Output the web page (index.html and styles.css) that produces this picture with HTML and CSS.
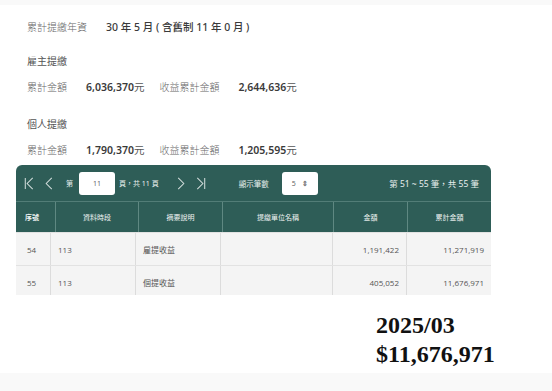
FILE: index.html
```html
<!DOCTYPE html>
<html lang="zh-Hant">
<head>
    <meta charset="UTF-8">
    <meta name="viewport" content="width=device-width, initial-scale=1.0">
    <title>累計提繳</title>
    <link rel="stylesheet" href="styles.css">
</head>
<body>
    <div class="page">
        <div class="summary">
            <div class="line">
                <span class="label">累計提繳年資</span>
                <span class="value">30 年 5 月 ( 含舊制 11 年 0 月 )</span>
            </div>

            <div class="section-title">雇主提繳</div>
            <div class="line amounts">
                <span class="label">累計金額</span>
                <span class="value">6,036,370<small>元</small></span>
                <span class="label">收益累計金額</span>
                <span class="value">2,644,636<small>元</small></span>
            </div>

            <div class="section-title">個人提繳</div>
            <div class="line amounts">
                <span class="label">累計金額</span>
                <span class="value">1,790,370<small>元</small></span>
                <span class="label">收益累計金額</span>
                <span class="value">1,205,595<small>元</small></span>
            </div>
        </div>

        <div class="grid-table">
            <div class="toolbar">
                <svg class="nav first" viewBox="0 0 10 14"><path d="M1 1v12M9 1L3 7l6 6"/></svg>
                <svg class="nav prev" viewBox="0 0 8 14"><path d="M7 1L1 7l6 6"/></svg>
                <span class="tb-text page-pre">第</span>
                <span class="page-input">11</span>
                <span class="tb-text page-post">頁，共 11 頁</span>
                <svg class="nav next" viewBox="0 0 8 14"><path d="M1 1l6 6-6 6"/></svg>
                <svg class="nav last" viewBox="0 0 10 14"><path d="M1 1l6 6-6 6M9 1v12"/></svg>
                <span class="tb-text size-label">顯示筆數</span>
                <span class="size-select">5 <b>&#8661;</b></span>
                <span class="range">第 51 ~ 55 筆，共 55 筆</span>
            </div>

            <div class="thead">
                <div class="th first-col">序號</div>
                <div class="th">資料時段</div>
                <div class="th">摘要說明</div>
                <div class="th">提繳單位名稱</div>
                <div class="th">金額</div>
                <div class="th">累計金額</div>
            </div>

            <div class="tbody">
                <div class="tr">
                    <div class="td">54</div>
                    <div class="td">113</div>
                    <div class="td">雇提收益</div>
                    <div class="td"></div>
                    <div class="td num">1,191,422</div>
                    <div class="td num">11,271,919</div>
                </div>
                <div class="tr">
                    <div class="td">55</div>
                    <div class="td">113</div>
                    <div class="td">個提收益</div>
                    <div class="td"></div>
                    <div class="td num">405,052</div>
                    <div class="td num">11,676,971</div>
                </div>
            </div>
        </div>

        <div class="total">
            <div>2025/03</div>
            <div>$11,676,971</div>
        </div>
    </div>
</body>
</html>
```

FILE: styles.css
```css
* {
    margin: 0;
    padding: 0;
    box-sizing: border-box;
}

body {
    font-family: 'Noto Sans', 'Noto Sans CJK TC', sans-serif;
    background: #f9f9f9;
    color: #333;
}

.page {
    margin-top: 5px;
    height: 368px;
    background: #fff;
    overflow: hidden;
}

/* summary block */
.summary {
    padding: 14px 0 0 27px;
}

.line {
    display: flex;
    align-items: center;
    height: 14px;
    font-size: 10px;
}

.label {
    color: #666;
    font-weight: 300;
}

.value {
    margin-left: 19px;
    font-size: 10.5px;
    font-weight: 600;
    color: #3a3a3a;
}

.line:first-child .value {
    font-weight: 500;
}

.value small {
    font-size: 10.5px;
    font-weight: 400;
    color: #555;
}

.amounts .value + .label {
    margin-left: 15px;
}

.section-title {
    font-size: 10px;
    line-height: 14px;
    color: #555;
    margin: 21px 0 11px;
}

.section-title + .line + .section-title {
    margin-top: 24px;
}

/* table */
.grid-table {
    margin: 9px 0 0 16px;
    width: 475px;
}

.toolbar {
    display: flex;
    align-items: center;
    height: 37px;
    padding: 0 12px 0 8px;
    background: #2e5d57;
    border-radius: 6px 6px 0 0;
    border-bottom: 1px solid #527d77;
    color: #e8efee;
}

.nav {
    height: 13px;
    fill: none;
    stroke: #d3dedc;
    stroke-width: 1.1;
}

.first { width: 10px; }
.prev { width: 8px; margin-left: 11px; }
.next { width: 8px; margin-left: 18px; }
.last { width: 10px; margin-left: 11px; }

.tb-text {
    font-size: 7px;
}

.page-pre { margin-left: 13px; }
.page-post { margin-left: 4px; }
.size-label { margin-left: 33px; font-size: 7.5px; }

.page-input,
.size-select {
    display: flex;
    align-items: center;
    height: 23px;
    width: 36px;
    background: #fff;
    border-radius: 3px;
    color: #666;
    font-size: 7px;
}

.page-input {
    justify-content: center;
    margin-left: 6px;
}

.size-select {
    margin-left: 13px;
    padding-left: 10px;
    gap: 6px;
}

.size-select b {
    font-size: 7px;
    color: #777;
}

.range {
    margin-left: auto;
    font-size: 8.5px;
}

.thead {
    display: grid;
    grid-template-columns: 39px 83px 84px 111px 74px 84px;
    height: 30px;
    background: #2e5d57;
    color: #eef3f2;
    font-size: 7px;
}

.th {
    display: flex;
    align-items: center;
    justify-content: center;
    border-left: 1px solid #5f8882;
}

.th:first-child {
    border-left: none;
}

.th.first-col {
    justify-content: flex-start;
    padding-left: 9px;
    font-weight: 700;
}

.tbody {
    height: 63px;
    overflow: hidden;
}

.tr {
    display: grid;
    grid-template-columns: 34px 85px 85px 112px 74px 85px;
    height: 33px;
    background: #f4f4f4;
    border-top: 1px solid #e2e2e2;
    font-family: 'Open Sans', 'Noto Sans CJK TC', sans-serif;
    font-size: 8px;
    color: #555;
}

.td {
    display: flex;
    align-items: center;
    padding: 0 7px;
    border-left: 1px solid #dcdcdc;
}

.td:first-child {
    border-left: none;
    padding-left: 11px;
}

.td.num {
    justify-content: flex-end;
}

/* big total */
.total {
    margin: 16px 0 0 376px;
    font-family: 'Liberation Serif', serif;
    font-weight: 700;
    font-size: 24px;
    line-height: 29px;
    color: #111;
}
```
